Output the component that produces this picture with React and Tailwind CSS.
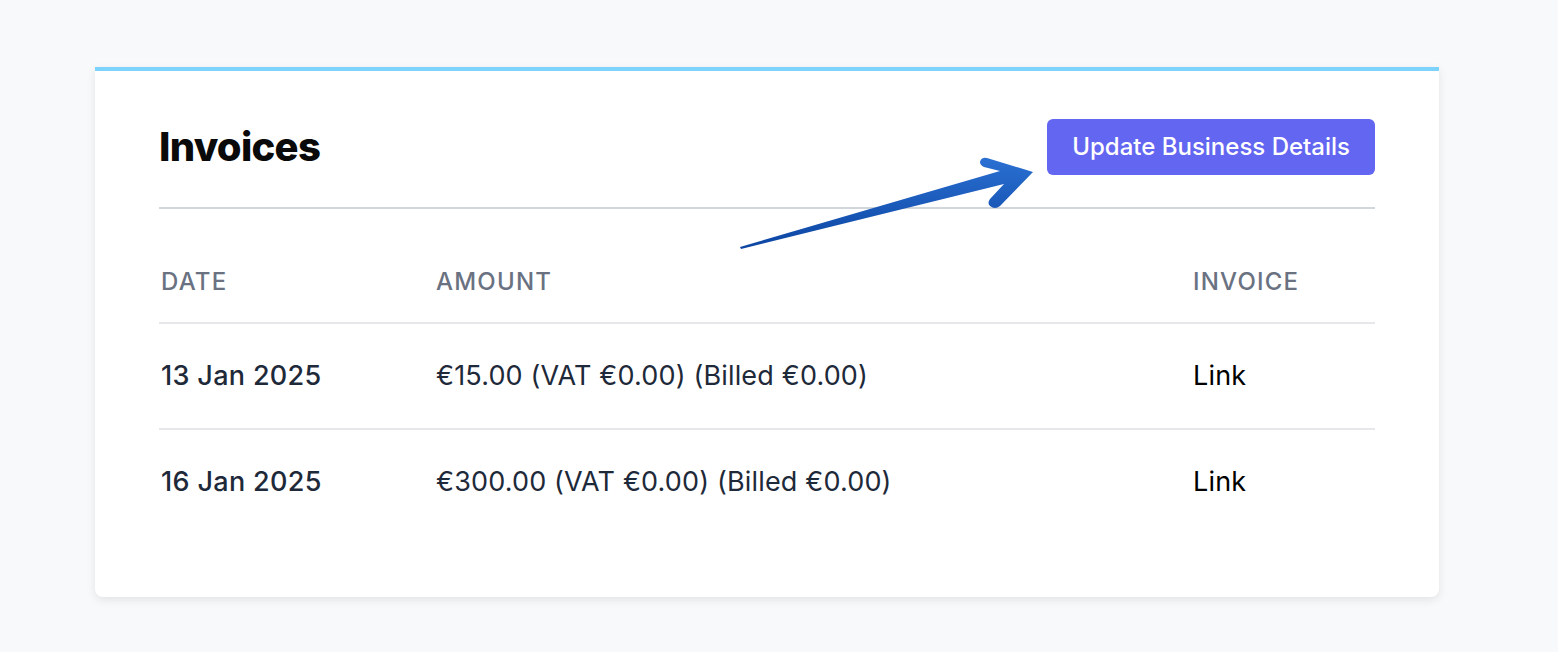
const rows = [
  { date: '13 Jan 2025', amount: '€15.00 (VAT €0.00) (Billed €0.00)' },
  { date: '16 Jan 2025', amount: '€300.00 (VAT €0.00) (Billed €0.00)' },
];

// Hand-drawn style annotation arrow pointing at the button
const Arrow = () => (
  <svg
    className="absolute left-[635px] top-[83px] pointer-events-none"
    width="310"
    height="100"
    viewBox="730 150 310 100"
  >
    <defs>
      <linearGradient id="arrowFill" x1="0" y1="0" x2="0" y2="1">
        <stop offset="0%" stopColor="#2a70d2" />
        <stop offset="100%" stopColor="#0c45a2" />
      </linearGradient>
    </defs>
    <path
      d="M 740 243 L 1000 167 L 984 163 Q 978 160 981 155.5 Q 983 153 987 154 L 1033 168 L 1000 202 Q 995 206 990 202 Q 987 199 990 195 L 1004 180 L 741 245 Z"
      fill="url(#arrowFill)"
    />
  </svg>
);

export default function App() {
  return (
    <div className="min-h-screen bg-[#f8f9fb] pt-[67px] font-['Inter',sans-serif]">
      <div className="relative ml-[95px] w-[1344px] bg-white border-t-4 border-[#7dd3fc] rounded-b-lg shadow-[0_3px_10px_rgba(0,0,0,0.09)] px-16 pt-12 pb-[63px]">
        {/* Header */}
        <div className="flex items-center justify-between pb-8 border-b-2 border-gray-300">
          <h1 className="text-[40px] leading-[48px] font-extrabold tracking-[-0.018em] text-[#0a0a0a]">
            Invoices
          </h1>
          <button className="h-[56px] px-[25px] rounded-md bg-[#6366f1] text-white text-[24px] font-medium">
            Update Business Details
          </button>
        </div>

        {/* Table */}
        <div className="mt-[33px]">
          <div className="grid grid-cols-[277px_757px_1fr] py-[26px] border-b-2 border-gray-200 text-[24px] leading-[28px] font-medium tracking-wider text-gray-500 uppercase">
            <div className="pl-[2px]">Date</div>
            <div>Amount</div>
            <div>Invoice</div>
          </div>
          {rows.map((r, i) => (
            <div
              key={r.date}
              className={`grid grid-cols-[277px_757px_1fr] py-9 text-[27px] leading-[32px] tracking-[0.006em] ${
                i < rows.length - 1 ? 'border-b-2 border-gray-200' : ''
              }`}
            >
              <div className="pl-[2px] font-medium text-gray-800 tracking-[0.012em]">{r.date}</div>
              <div className="text-gray-800">{r.amount}</div>
              <div className="text-black">
                <a href="#">Link</a>
              </div>
            </div>
          ))}
        </div>

        <Arrow />
      </div>
    </div>
  );
}
